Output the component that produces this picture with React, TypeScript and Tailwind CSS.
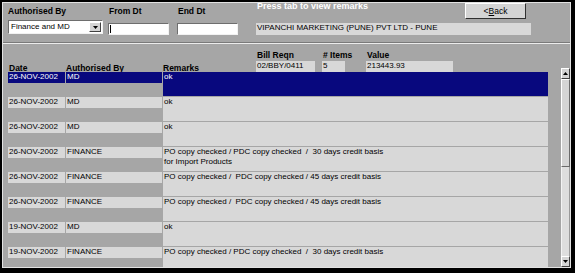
import React from "react";

type Row = { d: string; a: string; r: string; sel?: boolean };

const rows: Row[] = [
  { d: "26-NOV-2002", a: "MD", r: "ok", sel: true },
  { d: "26-NOV-2002", a: "MD", r: "ok" },
  { d: "26-NOV-2002", a: "MD", r: "ok" },
  {
    d: "26-NOV-2002",
    a: "FINANCE",
    r: "PO copy checked / PDC copy checked  /  30 days credit basis\nfor Import Products",
  },
  { d: "26-NOV-2002", a: "FINANCE", r: "PO copy checked /  PDC copy checked / 45 days credit basis" },
  { d: "26-NOV-2002", a: "FINANCE", r: "PO copy checked /  PDC copy checked / 45 days credit basis" },
  { d: "19-NOV-2002", a: "MD", r: "ok" },
  { d: "19-NOV-2002", a: "FINANCE", r: "PO copy checked / PDC copy checked  /  30 days credit basis" },
];

function Arrow({ up }: { up?: boolean }) {
  return (
    <svg width="5" height="3" viewBox="0 0 5 3" className="block">
      {up ? <polygon points="2.5,0 5,3 0,3" fill="#000" /> : <polygon points="0,0 5,0 2.5,3" fill="#000" />}
    </svg>
  );
}

export default function App() {
  const label = "h-[10px] leading-[10px] text-[8.5px] font-bold whitespace-nowrap";
  const sunkenWhite = "bg-white border border-t-[#6e6e6e] border-l-[#6e6e6e] border-b-[#f2f2f2] border-r-[#f2f2f2]";
  return (
    <div className="w-[575px] h-[273px] bg-black pt-[2px] pl-[2px] pr-[4px] pb-[5px] font-['Liberation_Sans',Arial,sans-serif] text-black overflow-hidden">
      <div className="h-full w-full border border-[#e2e2e2] bg-[#a6a6a6] overflow-hidden flex flex-col">
        {/* top section */}
        <div className="flex h-[39px] shrink-0">
          <div className="ml-[5px] w-[95px] flex flex-col">
            <div className={`mt-[3px] ${label}`}>Authorised By</div>
            <div className={`mt-[4px] h-[14px] w-[95px] flex items-center ${sunkenWhite}`}>
              <div className="flex-1 pl-[2px] text-[8px] leading-[10px] whitespace-nowrap">Finance and MD</div>
              <div className="mr-px h-[10px] w-[12px] bg-[#d4d4d4] border border-t-white border-l-white border-b-[#404040] border-r-[#404040] flex items-center justify-center">
                <Arrow />
              </div>
            </div>
          </div>
          <div className="ml-[5px] w-[61px] flex flex-col">
            <div className={`mt-[3px] ${label} pl-px`}>From Dt</div>
            <div className={`mt-[7px] h-[12px] w-[61px] ${sunkenWhite} flex items-center`}>
              <div className="ml-px h-[8px] w-px bg-black" />
            </div>
          </div>
          <div className="ml-[8px] w-[61px] flex flex-col">
            <div className={`mt-[3px] ${label} pl-px`}>End Dt</div>
            <div className={`mt-[7px] h-[12px] w-[61px] ${sunkenWhite}`} />
          </div>
          <div className="ml-[18px] w-[275px] flex flex-col">
            <div className="h-[20px] flex items-start">
              <div className="-mt-[2px] ml-px h-[10px] leading-[10px] text-[9px] font-bold text-white whitespace-nowrap">
                Press tab to view remarks
              </div>
              <div className="ml-auto mr-[5px] h-[16px] w-[61px] bg-[#d4d4d4] border border-t-white border-l-white border-b-[#303030] border-r-[#303030] flex items-center justify-center text-[8.5px] leading-[10px]">
                &lt;<span className="underline">B</span>ack
              </div>
            </div>
            <div className="h-[12px] w-[275px] bg-[#d8d8d8] pl-px text-[8px] leading-[10px] whitespace-nowrap">
              VIPANCHI MARKETING (PUNE) PVT LTD - PUNE
            </div>
          </div>
        </div>
        {/* groove */}
        <div className="h-[2px] shrink-0 border-t border-t-[#7a7a7a] border-b border-b-[#ececec]" />
        {/* lower section */}
        <div className="flex flex-1 min-h-0">
          <div className="w-[545px] flex flex-col overflow-hidden">
            <div className="h-[28px] shrink-0 flex items-end">
              <div className={`ml-[5px] w-[58px] pl-px h-[8px] leading-[8px] text-[8.5px] font-bold`}>Date</div>
              <div className={`w-[97px] h-[8px] leading-[8px] text-[8.5px] font-bold whitespace-nowrap`}>Authorised By</div>
              <div className="w-[385px] flex items-end">
                <div className="w-[93px] h-[8px] leading-[8px] text-[8.5px] font-bold">Remarks</div>
                <div className="flex">
                  <div className="w-[59px] flex flex-col">
                    <div className={`${label} pl-px`}>Bill Reqn</div>
                    <div className="mt-px h-[11px] bg-[#d8d8d8] pl-px text-[8px] leading-[9px]">02/BBY/0411</div>
                  </div>
                  <div className="ml-[7px] w-[23px] flex flex-col">
                    <div className={`${label} pl-px`}># Items</div>
                    <div className="mt-px h-[11px] bg-[#d8d8d8] pl-px text-[8px] leading-[9px]">5</div>
                  </div>
                  <div className="ml-[21px] w-[87px] flex flex-col">
                    <div className={`${label} pl-px`}>Value</div>
                    <div className="mt-px h-[11px] bg-[#d8d8d8] pl-px text-[8px] leading-[9px]">213443.93</div>
                  </div>
                </div>
              </div>
            </div>
            {rows.map((row, i) => {
              const c = row.sel ? "bg-[#08087e] text-white" : "bg-[#d8d8d8] text-black";
              return (
                <div key={i} className="h-[25px] shrink-0 flex items-start text-[8px] leading-[10px]">
                  <div className={`ml-[5px] mr-px w-[57px] h-[11px] pl-px whitespace-nowrap ${c}`}>{row.d}</div>
                  <div className={`mr-px w-[96px] h-[11px] pl-px whitespace-nowrap ${c}`}>{row.a}</div>
                  <div className={`w-[385px] h-[24px] pl-px whitespace-pre ${c}`}>{row.r}</div>
                </div>
              );
            })}
          </div>
          <div className="ml-[13px] mt-[24px] w-[9px] flex flex-col">
            <div className="h-[11px] shrink-0 bg-[#d4d4d4] border border-t-white border-l-white border-b-[#404040] border-r-[#404040] flex items-center justify-center">
              <Arrow up />
            </div>
            <div className="h-[88px] shrink-0 bg-[#d4d4d4] border border-t-white border-l-white border-b-[#6a6a6a] border-r-[#6a6a6a]" />
            <div className="flex-1 bg-[#dedede] border-l border-l-[#f4f4f4] border-r border-r-[#9a9a9a]" />
            <div className="h-[11px] shrink-0 bg-[#d4d4d4] border border-t-white border-l-white border-b-[#404040] border-r-[#404040] flex items-center justify-center">
              <Arrow />
            </div>
          </div>
        </div>
      </div>
    </div>
  );
}
